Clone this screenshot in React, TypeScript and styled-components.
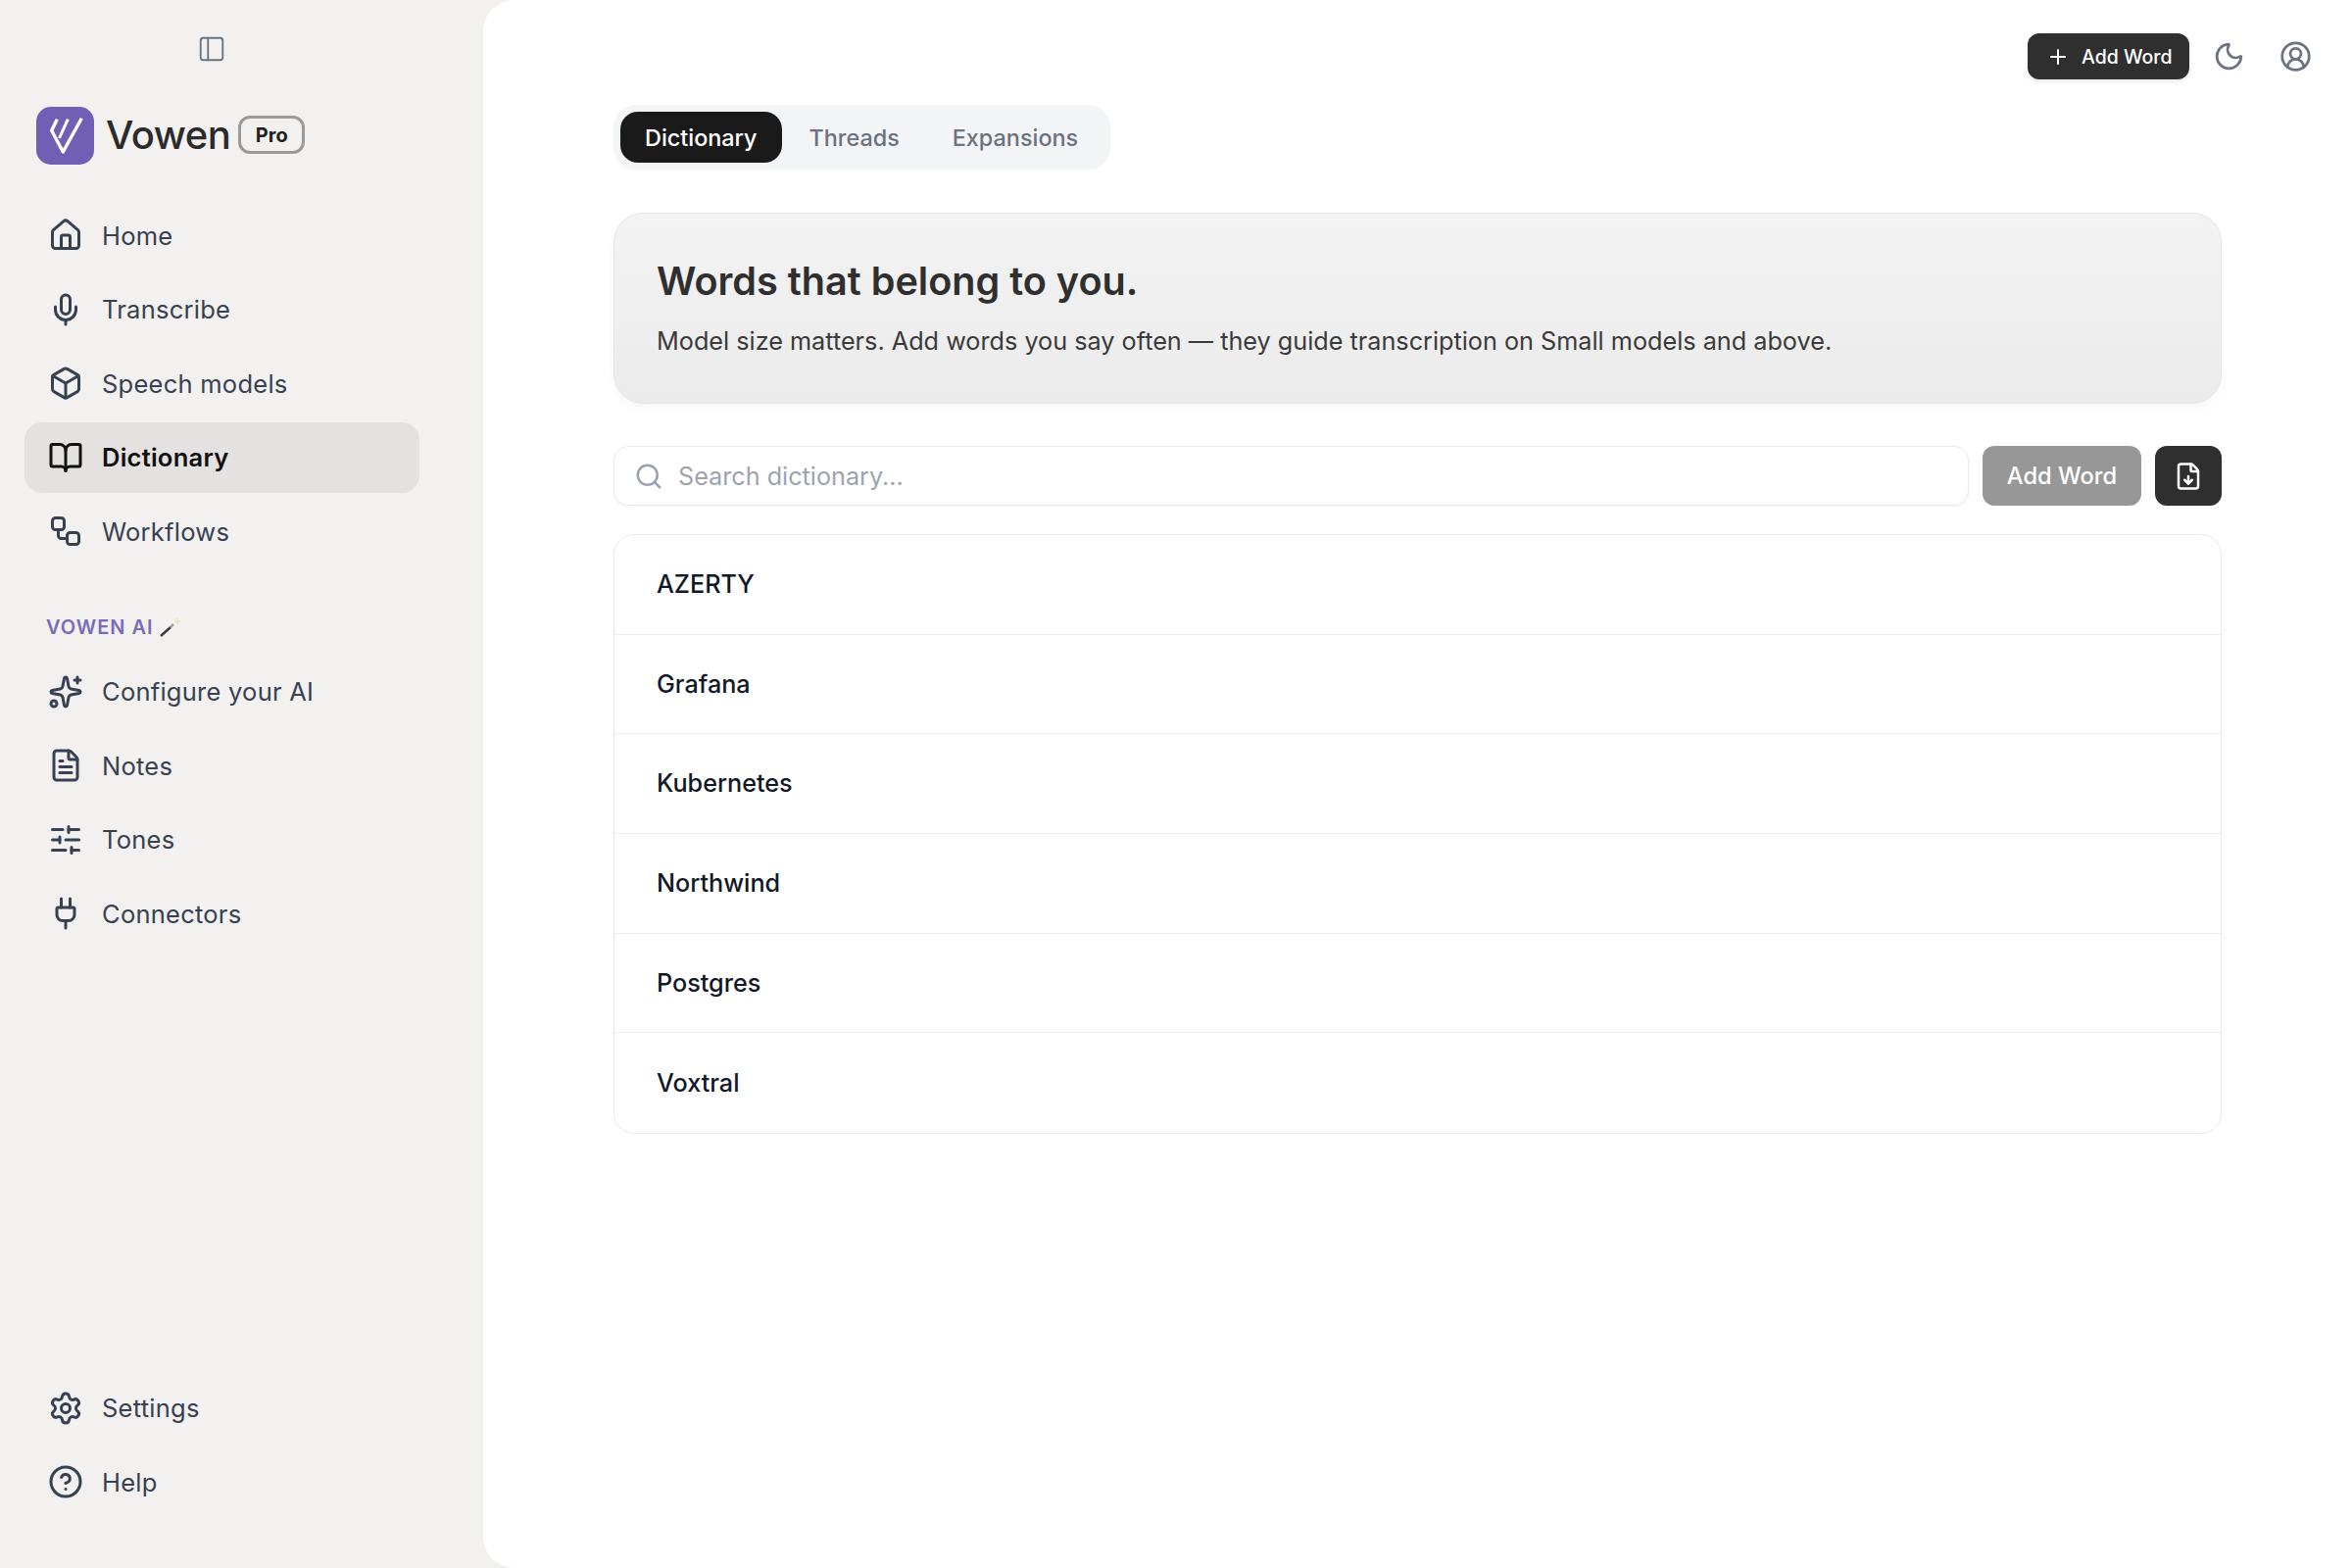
import React from 'react';
import styled, { createGlobalStyle } from 'styled-components';
import {
    BookOpen,
    Box,
    CircleHelp,
    CircleUserRound,
    FileDown,
    FileText,
    House,
    LucideIcon,
    Mic,
    Moon,
    PanelLeft,
    Plug,
    Plus,
    Search,
    Settings,
    SlidersHorizontal,
    Sparkles,
    Workflow
} from 'lucide-react';

const GlobalStyle = createGlobalStyle`
    html, body, #root {
        margin: 0;
        height: 100%;
    }
    body {
        font-family: Inter, "Liberation Sans", sans-serif;
        background: #f2f1ef;
        color: #111827;
    }
    * {
        box-sizing: border-box;
    }
`;

const Shell = styled.div`
    display: flex;
    height: 1600px;
    background: #f2f1ef;
`;

const Sidebar = styled.aside`
    display: flex;
    flex-direction: column;
    flex: 0 0 493px;
    padding: 0 65px 52px 25px;
`;

const ToggleRow = styled.div`
    display: flex;
    height: 109px;
    padding: 35px 0 0 176px;
    color: #6b7280;
`;

const Brand = styled.div`
    display: flex;
    align-items: center;
    height: 59px;
    margin-bottom: 36px;
    padding-left: 12px;
`;

const BrandName = styled.span`
    margin: -2px 0 0 12px;
    font-size: 40px;
    font-weight: 500;
    letter-spacing: -0.5px;
    color: #2b2b2b;
`;

const ProBadge = styled.span`
    display: flex;
    align-items: center;
    justify-content: center;
    width: 68px;
    height: 39px;
    margin: -2px 0 0 8px;
    border: 3px solid #9a9a9a;
    border-radius: 12px;
    font-size: 20px;
    font-weight: 700;
    color: #1f1f1f;
`;

const NavList = styled.nav`
    display: flex;
    flex-direction: column;
    gap: 3.5px;
`;

const NavItem = styled.div<{ $active?: boolean }>`
    display: flex;
    align-items: center;
    gap: 19px;
    height: 72px;
    padding-left: 24px;
    border-radius: 18px;
    font-size: 25.5px;
    font-weight: ${(props) => (props.$active ? 600 : 400)};
    letter-spacing: 0.25px;
    color: ${(props) => (props.$active ? '#111111' : '#374151')};
    background: ${(props) => (props.$active ? '#e3e2e0' : 'transparent')};
`;

const SectionLabel = styled.div`
    display: flex;
    align-items: center;
    gap: 5px;
    height: 30px;
    margin: 46.500px 0 15px;
    padding-left: 22px;
    font-size: 20px;
    font-weight: 600;
    letter-spacing: 1px;
    color: #7a6db5;
`;

const Footer = styled(NavList)`
    margin-top: auto;
`;

const Main = styled.main`
    flex: 1;
    display: flex;
    flex-direction: column;
    background: #ffffff;
    border-radius: 32px 0 0 32px;
`;

const TopBar = styled.header`
    display: flex;
    align-items: center;
    justify-content: flex-end;
    height: 47px;
    margin-top: 34px;
    padding-right: 36px;
    color: #6b7280;
`;

const TopAddButton = styled.button`
    display: flex;
    align-items: center;
    gap: 12px;
    width: 165px;
    height: 47px;
    margin-right: 18px;
    padding: 0 0 0 19px;
    border: 0;
    border-radius: 12px;
    background: #2f2f2f;
    box-shadow: 0 2px 4px rgba(0, 0, 0, 0.1);
    font: inherit;
    font-size: 19.5px;
    font-weight: 500;
    color: #ffffff;
`;

const TopIcon = styled.span`
    display: flex;
    justify-content: center;
    width: 44px;
    margin-left: ${(props: { $gap?: number }) => props.$gap ?? 0}px;
`;

const Content = styled.div`
    display: flex;
    flex-direction: column;
    width: 1641px;
    margin: 26px auto 0;
`;

const Tabs = styled.div`
    display: flex;
    align-items: center;
    align-self: flex-start;
    height: 66px;
    padding: 0 6px 0 7px;
    border-radius: 24px;
    background: #f3f4f6;
    box-shadow: 0 1px 3px rgba(0, 0, 0, 0.04);
`;

const Tab = styled.div<{ $active?: boolean }>`
    display: flex;
    align-items: center;
    height: 52px;
    padding: 0 ${(props) => (props.$active ? '26px 0 25px' : '27px')};
    border-radius: 18px;
    font-size: 23.4px;
    font-weight: 500;
    color: ${(props) => (props.$active ? '#ffffff' : '#6b7280')};
    background: ${(props) => (props.$active ? '#1a1a1a' : 'transparent')};
`;

const Hero = styled.section`
    height: 195px;
    margin-top: 44px;
    padding: 45px 43px 0;
    border: 1px solid #e6e6e6;
    border-radius: 30px;
    background: linear-gradient(180deg, #f3f3f3 0%, #ebebeb 100%);
    box-shadow: 0 4px 10px rgba(0, 0, 0, 0.04);
`;

const HeroTitle = styled.h1`
    margin: 0;
    font-size: 39.6px;
    line-height: 48px;
    font-weight: 600;
    color: #2f2f2f;
`;

const HeroText = styled.p`
    margin: 19px 0 0;
    font-size: 25.22px;
    line-height: 36px;
    color: #3a3a3a;
`;

const Toolbar = styled.div`
    display: flex;
    gap: 14px;
    height: 61px;
    margin-top: 43px;
`;

const SearchBox = styled.div`
    flex: 1;
    display: flex;
    align-items: center;
    gap: 15px;
    padding-left: 20px;
    border: 1px solid #e9e9e9;
    border-radius: 15px;
    box-shadow: 0 1px 3px rgba(0, 0, 0, 0.05);
    font-size: 25.2px;
    color: #9ca3af;
`;

const AddButton = styled.button`
    width: 162px;
    border: 0;
    border-radius: 12px;
    background: #979797;
    font: inherit;
    font-size: 23.7px;
    font-weight: 500;
    color: #ffffff;
`;

const ImportButton = styled.button`
    display: flex;
    align-items: center;
    justify-content: center;
    width: 68px;
    border: 0;
    border-radius: 12px;
    background: #2f2f2f;
    color: #ffffff;
`;

const WordList = styled.div`
    margin-top: 29px;
    border: 1px solid #e9e9e9;
    border-radius: 21px;
`;

const WordRow = styled.div`
    display: flex;
    align-items: center;
    height: 101.7px;
    padding: 0 0 1px 43px;
    border-bottom: 1px solid #ececec;
    font-size: 25.2px;
    font-weight: 500;
    color: #111827;

    &:last-child {
        border-bottom: 0;
    }
`;

interface NavEntry {
    readonly label: string;
    readonly icon: LucideIcon;
    readonly active?: boolean;
}

const primaryNav: NavEntry[] = [
    { label: 'Home', icon: House },
    { label: 'Transcribe', icon: Mic },
    { label: 'Speech models', icon: Box },
    { label: 'Dictionary', icon: BookOpen, active: true },
    { label: 'Workflows', icon: Workflow }
];

const aiNav: NavEntry[] = [
    { label: 'Configure your AI', icon: Sparkles },
    { label: 'Notes', icon: FileText },
    { label: 'Tones', icon: SlidersHorizontal },
    { label: 'Connectors', icon: Plug }
];

const footerNav: NavEntry[] = [
    { label: 'Settings', icon: Settings },
    { label: 'Help', icon: CircleHelp }
];

const words = ['AZERTY', 'Grafana', 'Kubernetes', 'Northwind', 'Postgres', 'Voxtral'];

const renderNav = (entries: NavEntry[]) =>
    entries.map(({ label, icon: Icon, active }) => (
        <NavItem key={label} $active={active}>
            <Icon size={36} strokeWidth={2} />
            {label}
        </NavItem>
    ));

const Logo: React.FC = () => (
    <svg width="59" height="59" viewBox="0 0 59 59" fill="none">
        <rect width="59" height="59" rx="15" fill="#6f60b6" />
        <path
            d="M21.300 12.700L15.700 24.300L27.300 46L46.300 11.700"
            stroke="#fff"
            strokeWidth="3.400"
            strokeLinejoin="round"
        />
        <path d="M32.300 12.700L23.500 32" stroke="#fff" strokeWidth="3" />
    </svg>
);

const Wand: React.FC = () => (
    <svg width="24" height="22" viewBox="0 0 24 22" fill="none">
        <path d="M2 20L12 11" stroke="#3d3d3d" strokeWidth="2.500" />
        <path d="M12 11L15 8" stroke="#a9a48c" strokeWidth="2.500" />
        <path d="M19 2V8M16 5H22" stroke="#e8e2b8" strokeWidth="1.500" />
    </svg>
);

const App: React.FC = () => (
    <>
        <GlobalStyle />
        <Shell>
            <Sidebar>
                <ToggleRow>
                    <PanelLeft size={30} strokeWidth={1.5} />
                </ToggleRow>
                <Brand>
                    <Logo />
                    <BrandName>Vowen</BrandName>
                    <ProBadge>Pro</ProBadge>
                </Brand>
                <NavList>{renderNav(primaryNav)}</NavList>
                <SectionLabel>
                    VOWEN AI
                    <Wand />
                </SectionLabel>
                <NavList>{renderNav(aiNav)}</NavList>
                <Footer>{renderNav(footerNav)}</Footer>
            </Sidebar>
            <Main>
                <TopBar>
                    <TopAddButton>
                        <Plus size={24} strokeWidth={2} />
                        Add Word
                    </TopAddButton>
                    <TopIcon>
                        <Moon size={33} strokeWidth={2} />
                    </TopIcon>
                    <TopIcon $gap={24}>
                        <CircleUserRound size={33} strokeWidth={2} />
                    </TopIcon>
                </TopBar>
                <Content>
                    <Tabs>
                        <Tab $active>Dictionary</Tab>
                        <Tab>Threads</Tab>
                        <Tab>Expansions</Tab>
                    </Tabs>
                    <Hero>
                        <HeroTitle>Words that belong to you.</HeroTitle>
                        <HeroText>
                            Model size matters. Add words you say often — they guide
                            transcription on Small models and above.
                        </HeroText>
                    </Hero>
                    <Toolbar>
                        <SearchBox>
                            <Search size={30} strokeWidth={2} />
                            Search dictionary...
                        </SearchBox>
                        <AddButton>Add Word</AddButton>
                        <ImportButton>
                            <FileDown size={30} strokeWidth={2} />
                        </ImportButton>
                    </Toolbar>
                    <WordList>
                        {words.map((word) => (
                            <WordRow key={word}>{word}</WordRow>
                        ))}
                    </WordList>
                </Content>
            </Main>
        </Shell>
    </>
);

export default App;
